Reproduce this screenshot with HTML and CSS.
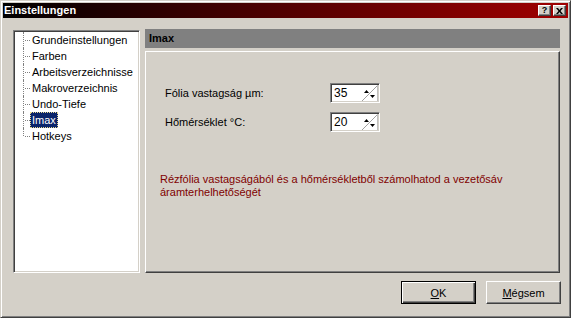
FILE: index.html
```html
<!DOCTYPE html>
<html lang="hu">
<head>
    <meta charset="UTF-8">
    <title>Einstellungen</title>
    <link rel="stylesheet" href="styles.css">
</head>
<body>
    <div class="window">
        <div class="titlebar">
            <span class="title">Einstellungen</span>
            <div class="caption-btns">
                <span class="cap">?</span>
                <span class="cap">
                    <svg width="7" height="6" viewBox="0 0 7 6">
                        <path d="M0 0h2l1.5 2 1.5-2h2l-2.5 3 2.5 3h-2l-1.5-2-1.5 2h-2l2.5-3z" fill="#000"/>
                    </svg>
                </span>
            </div>
        </div>

        <div class="client">
            <div class="main">
                <div class="tree">
                    <ul>
                        <li><span>Grundeinstellungen</span></li>
                        <li><span>Farben</span></li>
                        <li><span>Arbeitsverzeichnisse</span></li>
                        <li><span>Makroverzeichnis</span></li>
                        <li><span>Undo-Tiefe</span></li>
                        <li><span class="selected">Imax</span></li>
                        <li><span>Hotkeys</span></li>
                    </ul>
                </div>

                <div class="page">
                    <div class="page-head">Imax</div>
                    <div class="page-body">
                        <div class="fields">
                            <label>Fólia vastagság µm:</label>
                            <div class="spin">
                                <span class="spin-value">35</span>
                                <svg width="16" height="16" viewBox="0 0 16 16">
                                    <path d="M0 16L16 0" stroke="#a0a0a0" stroke-width="1"/>
                                    <path d="M15.5 0v16" stroke="#c0c0c0" stroke-width="1"/>
                                    <polygon points="2,8 7,8 4.5,5" fill="#000"/>
                                    <polygon points="8,10 13,10 10.5,13" fill="#000"/>
                                </svg>
                            </div>
                            <label>Hőmérséklet °C:</label>
                            <div class="spin">
                                <span class="spin-value">20</span>
                                <svg width="16" height="16" viewBox="0 0 16 16">
                                    <path d="M0 16L16 0" stroke="#a0a0a0" stroke-width="1"/>
                                    <path d="M15.5 0v16" stroke="#c0c0c0" stroke-width="1"/>
                                    <polygon points="2,8 7,8 4.5,5" fill="#000"/>
                                    <polygon points="8,10 13,10 10.5,13" fill="#000"/>
                                </svg>
                            </div>
                        </div>
                        <p class="note">Rézfólia vastagságából és a hőmérsékletből számolhatod a vezetősáv<br>áramterhelhetőségét</p>
                    </div>
                </div>
            </div>

            <div class="footer">
                <button class="btn default"><u>O</u>K</button>
                <button class="btn"><u>M</u>égsem</button>
            </div>
        </div>
    </div>
</body>
</html>
```

FILE: styles.css
```css
body {
    margin: 0;
    font-family: "Liberation Sans", Arial, sans-serif;
    font-size: 11px;
    color: #000;
    background-color: #d4d0c8;
}

.window {
    box-sizing: border-box;
    width: 571px;
    height: 318px;
    padding: 2px;
    border: 1px solid;
    border-color: #d4d0c8 #404040 #404040 #d4d0c8;
    box-shadow: inset 1px 1px #fff, inset -1px -1px #808080;
    background-color: #d4d0c8;
    display: flex;
    flex-direction: column;
}

.titlebar {
    height: 15px;
    display: flex;
    align-items: center;
    justify-content: space-between;
    padding: 0 2px 0 1px;
    background: linear-gradient(to right, #000 0%, #3a0000 35%, #a00000 100%);
    color: #fff;
}

.title {
    font-weight: bold;
    font-size: 11px;
    line-height: 15px;
}

.caption-btns {
    display: flex;
    gap: 2px;
}

.cap {
    box-sizing: border-box;
    width: 13px;
    height: 11px;
    display: flex;
    align-items: center;
    justify-content: center;
    background-color: #d4d0c8;
    border: 1px solid;
    border-color: #fff #404040 #404040 #fff;
    box-shadow: inset -1px -1px #808080;
    color: #000;
    font-weight: bold;
    font-size: 9px;
    line-height: 9px;
}

.client {
    flex: 1;
    display: flex;
    flex-direction: column;
    padding: 11px 8px 0 10px;
}

.main {
    display: flex;
    gap: 5px;
    height: 244px;
}

/* tree view */
.tree {
    box-sizing: border-box;
    width: 127px;
    height: 243px;
    margin-top: 1px;
    padding: 1px;
    background-color: #fff;
    border: 1px solid;
    border-color: #808080 #fff #fff #808080;
    box-shadow: inset 1px 1px #404040, inset -1px -1px #d4d0c8;
}

.tree ul {
    list-style: none;
    margin: 0;
    padding: 0;
}

.tree li {
    position: relative;
    height: 16px;
    line-height: 16px;
    padding-left: 15px;
}

.tree li::before {
    content: "";
    position: absolute;
    left: 8px;
    top: 0;
    height: 16px;
    border-left: 1px dotted #808080;
}

.tree li:last-child::before {
    height: 8px;
}

.tree li::after {
    content: "";
    position: absolute;
    left: 10px;
    top: 8px;
    width: 5px;
    border-top: 1px dotted #808080;
}

.tree li span {
    display: inline-block;
    padding: 0 1px;
    line-height: 14px;
    border: 1px solid transparent;
}

.tree li span.selected {
    background-color: #0a246a;
    color: #fff;
    border: 1px dotted #e8d890;
}

/* right page */
.page {
    width: 415px;
    display: flex;
    flex-direction: column;
    gap: 3px;
}

.page-head {
    height: 19px;
    line-height: 19px;
    padding-left: 4px;
    background-color: #808080;
    font-weight: bold;
}

.page-body {
    flex: 1;
    box-sizing: border-box;
    padding: 31px 0 0 19px;
    border: 1px solid;
    border-color: #fff #404040 #404040 #fff;
    box-shadow: inset -1px -1px #808080;
}

.fields {
    display: grid;
    grid-template-columns: 165px 50px;
    row-gap: 9px;
    align-items: center;
}

.spin {
    box-sizing: border-box;
    width: 50px;
    height: 20px;
    display: flex;
    align-items: center;
    padding: 0 0 0 1px;
    background-color: #fff;
    border: 1px solid;
    border-color: #808080 #fff #fff #808080;
    box-shadow: inset 1px 1px #404040, inset -1px -1px #d4d0c8;
}

.spin-value {
    flex: 1;
    padding-left: 2px;
    font-size: 12px;
}

.spin svg {
    display: block;
    margin-right: 1px;
}

.note {
    margin: 41px 0 0 -5px;
    color: #800000;
    line-height: 13px;
}

/* buttons */
.footer {
    display: flex;
    justify-content: flex-end;
    gap: 10px;
    margin-top: 8px;
    margin-right: -1px;
}

.btn {
    box-sizing: border-box;
    width: 75px;
    height: 23px;
    padding: 0;
    font-family: "Liberation Sans", Arial, sans-serif;
    font-size: 11px;
    color: #000;
    background-color: #d4d0c8;
    border: 1px solid;
    border-color: #fff #404040 #404040 #fff;
    box-shadow: inset -1px -1px #808080;
}

.btn.default {
    border-color: #000;
    box-shadow: inset 1px 1px #fff, inset -1px -1px #404040, inset -2px -2px #808080;
}
```
